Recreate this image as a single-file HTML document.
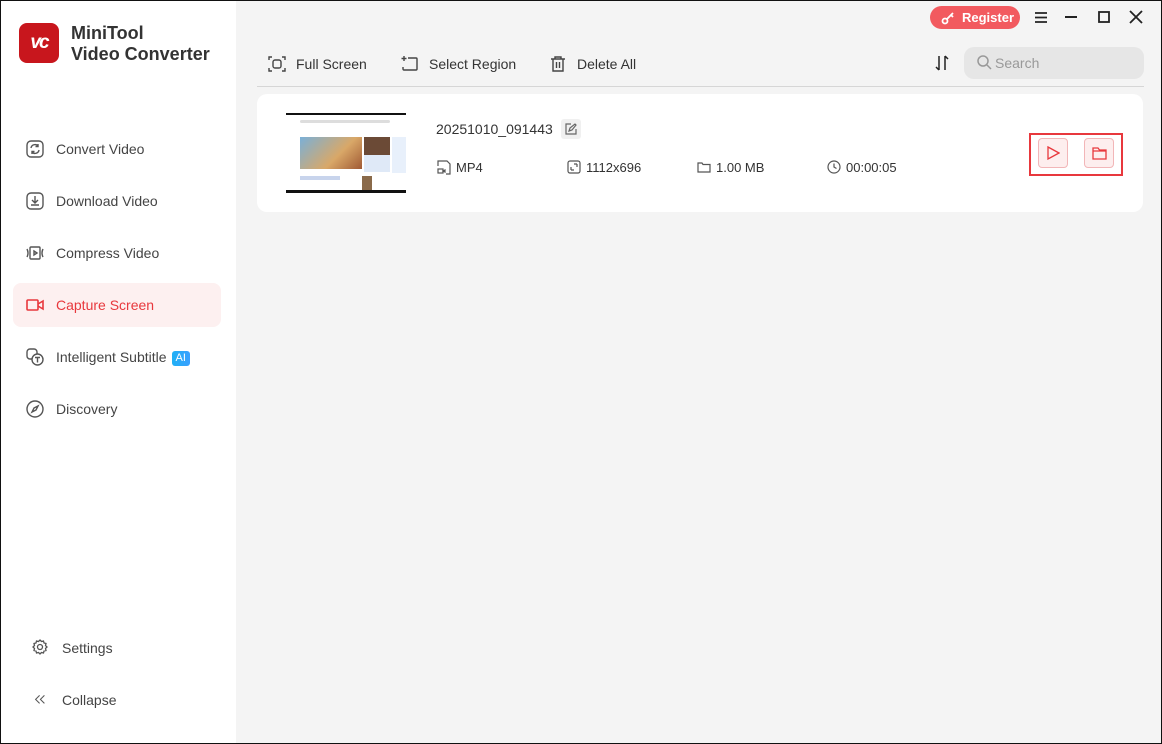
<!DOCTYPE html>
<html><head><meta charset="utf-8"><style>
*{box-sizing:border-box;margin:0;padding:0}
body{width:1162px;height:744px;font-family:"Liberation Sans",sans-serif;position:relative;overflow:hidden;background:#f4f4f4}
.win{position:absolute;left:0;top:0;width:1162px;height:744px;border:1px solid #111;}
.side{position:absolute;left:1px;top:1px;width:235px;height:742px;background:#fff}
.logo{position:absolute;left:18px;top:22px;width:40px;height:40px;border-radius:8px;background:#c8161d;color:#fff;font-weight:bold;font-size:19px;font-style:italic;text-align:center;line-height:40px;letter-spacing:-2px}
.brand{position:absolute;left:70px;top:22px;font-size:18px;font-weight:bold;color:#333;line-height:21px}
.nav{position:absolute;left:12px;width:208px;height:44px;border-radius:8px;font-size:14px;color:#444;line-height:44px;padding-left:43px}
.nav svg{position:absolute;left:13px;top:13px}
.nav.act{background:#fdf0f0;color:#e8383d}
.ai{display:inline-block;background:linear-gradient(90deg,#1fb0f5,#3aa0ff);color:#fff;font-size:11px;line-height:15px;padding:0 4px;border-radius:3px;margin-left:5px;vertical-align:1px}
.tb{position:absolute;top:55px;font-size:14px;color:#333;line-height:18px}
.tb svg{position:absolute;left:-28px;top:0}
.card{position:absolute;left:257px;top:94px;width:886px;height:118px;background:#fff;border-radius:10px}
.meta{position:absolute;top:160px;font-size:13px;color:#333;line-height:15px}
.meta svg{position:absolute;left:-19px;top:0}
</style></head><body>
<div class="win"></div>
<div class="side">
 <div class="logo">vc</div>
 <div class="brand">MiniTool<br>Video Converter</div>
 <div class="nav" style="top:126px"><svg width="18" height="18" viewBox="0 0 18 18" fill="none" stroke="#555" stroke-width="1.4"><rect x="1" y="1" width="16" height="16" rx="4"/><path d="M5 8a4 4 0 0 1 7-2M13 10a4 4 0 0 1-7 2M12 4v2.5h-2.5M6 14v-2.5h2.5"/></svg>Convert Video</div>
 <div class="nav" style="top:178px"><svg width="18" height="18" viewBox="0 0 18 18" fill="none" stroke="#555" stroke-width="1.4"><rect x="1" y="1" width="16" height="16" rx="4"/><path d="M9 4v7M6 8l3 3 3-3M5 13h8"/></svg>Download Video</div>
 <div class="nav" style="top:230px"><svg width="18" height="18" viewBox="0 0 18 18" fill="none" stroke="#555" stroke-width="1.4"><rect x="4" y="3" width="10" height="12" rx="1"/><path d="M8 7l3 2-3 2zM1 5q2 4 0 8M17 5q-2 4 0 8"/></svg>Compress Video</div>
 <div class="nav act" style="top:282px"><svg width="18" height="18" viewBox="0 0 18 18" fill="none" stroke="#e8383d" stroke-width="1.6"><rect x="1" y="4" width="11" height="10" rx="1"/><path d="M12 8l5-3v8l-5-3"/></svg>Capture Screen</div>
 <div class="nav" style="top:334px"><svg width="18" height="18" viewBox="0 0 18 18" fill="none" stroke="#555" stroke-width="1.4"><rect x="1" y="1" width="10" height="10" rx="3"/><circle cx="11.5" cy="11.5" r="5.5" fill="#fff"/><path d="M9 9.5h5M11.5 9.5v5"/></svg>Intelligent Subtitle<span class="ai">AI</span></div>
 <div class="nav" style="top:386px"><svg width="18" height="18" viewBox="0 0 18 18" fill="none" stroke="#555" stroke-width="1.4"><circle cx="9" cy="9" r="8"/><path d="M12 6l-2 4-4 2 2-4z"/></svg>Discovery</div>
 <div class="nav" style="top:625px;padding-left:49px"><svg style="left:19px" width="16" height="16" viewBox="0 0 16 16" fill="none" stroke="#555" stroke-width="1.3"><circle cx="8" cy="8" r="2.5"/><path d="M8 1l1.5 1.5 2-.5.5 2 2 .5-.5 2L15 8l-1.5 1.5.5 2-2 .5-.5 2-2-.5L8 15l-1.5-1.5-2 .5-.5-2-2-.5.5-2L1 8l1.5-1.5-.5-2 2-.5.5-2 2 .5z"/></svg>Settings</div>
 <div class="nav" style="top:677px;padding-left:49px"><svg style="left:21px;top:15px" width="14" height="14" viewBox="0 0 14 14" fill="none" stroke="#555" stroke-width="1.3"><path d="M6 2L1 7l5 5M12 2L7 7l5 5" transform="scale(.8) translate(1,1)"/></svg>Collapse</div>
</div>
<div style="position:absolute;left:930px;top:6px;width:90px;height:23px;border-radius:12px;background:#f25a5f;color:#fff;font-size:13px;font-weight:bold;line-height:23px;padding-left:32px">Register</div>
<svg style="position:absolute;left:941px;top:11px" width="14" height="14" viewBox="0 0 14 14" fill="none" stroke="#fff" stroke-width="1.8"><circle cx="4" cy="10" r="2.5"/><path d="M6 8l6-6M10 4l2 2"/></svg>
<svg style="position:absolute;left:1034px;top:11px" width="14" height="13" viewBox="0 0 14 13" stroke="#222" stroke-width="1.8"><path d="M1 2h12M1 6.5h12M1 11h12"/></svg>
<svg style="position:absolute;left:1065px;top:16px" width="12" height="3"><rect width="12" height="2" fill="#222"/></svg>
<svg style="position:absolute;left:1098px;top:11px" width="12" height="12" fill="none" stroke="#222" stroke-width="1.8"><rect x="1" y="1" width="10" height="10"/></svg>
<svg style="position:absolute;left:1129px;top:10px" width="14" height="14" stroke="#222" stroke-width="1.8"><path d="M1 1l12 12M13 1L1 13"/></svg>
<div class="tb" style="left:296px"><svg width="18" height="18" viewBox="0 0 18 18" fill="none" stroke="#444" stroke-width="1.4"><path d="M1 5V2h3M14 2h3v3M17 13v3h-3M4 16H1v-3"/><rect x="5" y="5" width="8" height="8" rx="2"/></svg>Full Screen</div>
<div class="tb" style="left:429px"><svg width="18" height="18" viewBox="0 0 18 18" fill="none" stroke="#444" stroke-width="1.4"><path d="M7 3h8a1 1 0 0 1 1 1v10a1 1 0 0 1-1 1H3a1 1 0 0 1-1-1v-2M3 1v5M.5 3.5h5"/></svg>Select Region</div>
<div class="tb" style="left:577px"><svg width="18" height="18" viewBox="0 0 18 18" fill="none" stroke="#444" stroke-width="1.4"><path d="M2 4h14M6 4V2h6v2M4 4v12h10V4M7.5 7v6M10.5 7v6"/></svg>Delete All</div>
<svg style="position:absolute;left:935px;top:55px" width="14" height="16" fill="none" stroke="#222" stroke-width="1.5"><path d="M4 1v14M1 12l3 3M10 15V1M10 1l3 3"/></svg>
<div style="position:absolute;left:964px;top:47px;width:180px;height:32px;border-radius:10px;background:#e6e6e6;color:#999;font-size:14px;line-height:32px;padding-left:31px">Search</div>
<svg style="position:absolute;left:977px;top:55px" width="15" height="15" fill="none" stroke="#999" stroke-width="1.5"><circle cx="6" cy="6" r="5"/><path d="M10 10l4 4"/></svg>
<div style="position:absolute;left:257px;top:86px;width:887px;height:1px;background:#d6d6d6"></div>
<div class="card"></div>
<div style="position:absolute;left:286px;top:113px;width:120px;height:80px;background:#fff;border-top:2px solid #111;border-bottom:3px solid #111">
 <div style="position:absolute;left:14px;top:5px;width:90px;height:3px;border-radius:2px;background:#ddd"></div>
 <div style="position:absolute;left:14px;top:22px;width:62px;height:32px;background:linear-gradient(135deg,#7ab0d8,#d9a868 60%,#a05a34)"></div>
 <div style="position:absolute;left:78px;top:22px;width:26px;height:18px;background:#6b4a36"></div>
 <div style="position:absolute;left:78px;top:40px;width:26px;height:17px;background:#dfe9f7"></div>
 <div style="position:absolute;left:106px;top:22px;width:14px;height:36px;background:#e8f0fb"></div>
 <div style="position:absolute;left:14px;top:61px;width:40px;height:4px;background:#c8d4ec"></div>
 <div style="position:absolute;left:76px;top:61px;width:10px;height:14px;background:#8a6a4a"></div>
</div>
<div style="position:absolute;left:436px;top:121px;font-size:14px;color:#333">20251010_091443</div>
<div style="position:absolute;left:561px;top:119px;width:20px;height:20px;border-radius:3px;background:#f0f0f0"></div>
<svg style="position:absolute;left:565px;top:123px" width="12" height="12" fill="none" stroke="#666" stroke-width="1.2"><path d="M6 1H1v10h10V6M4 8l1-3 5-4 1 1-4 5z"/></svg>
<div class="meta" style="left:456px"><svg width="14" height="15" fill="none" stroke="#555" stroke-width="1.2"><path d="M4 1h6l3 3v10H9M1 6V1h3"/><rect x="1" y="9" width="5" height="4"/><path d="M6 11l2-1v2z"/></svg>MP4</div>
<div class="meta" style="left:586px"><svg width="14" height="14" fill="none" stroke="#555" stroke-width="1.2"><rect x="1" y="1" width="12" height="12" rx="2"/><path d="M4 10V7M4 10h3M10 4v3M10 4H7"/></svg>1112x696</div>
<div class="meta" style="left:716px"><svg width="14" height="14" fill="none" stroke="#555" stroke-width="1.2"><path d="M1 3h4l1 1.5h7V12H1z"/></svg>1.00 MB</div>
<div class="meta" style="left:846px"><svg width="14" height="14" fill="none" stroke="#555" stroke-width="1.2"><circle cx="7" cy="7" r="6"/><path d="M7 3.5V7l2.5 1.5"/></svg>00:00:05</div>
<div style="position:absolute;left:1029px;top:133px;width:94px;height:43px;border:2px solid #e8383d"></div>
<div style="position:absolute;left:1038px;top:138px;width:30px;height:30px;border-radius:4px;border:1px solid #f2b6b8;background:#fdeeee"></div>
<svg style="position:absolute;left:1046px;top:146px" width="14" height="14" fill="none" stroke="#e8383d" stroke-width="1.3"><path d="M2 1l11 6-11 6z"/></svg>
<div style="position:absolute;left:1084px;top:138px;width:30px;height:30px;border-radius:4px;border:1px solid #f2b6b8;background:#fdeeee"></div>
<svg style="position:absolute;left:1092px;top:146px" width="15" height="14" fill="none" stroke="#e8383d" stroke-width="1.3"><path d="M1 2h5l1.5 2H14v9H1zM1 5h13"/></svg>
</body></html>
